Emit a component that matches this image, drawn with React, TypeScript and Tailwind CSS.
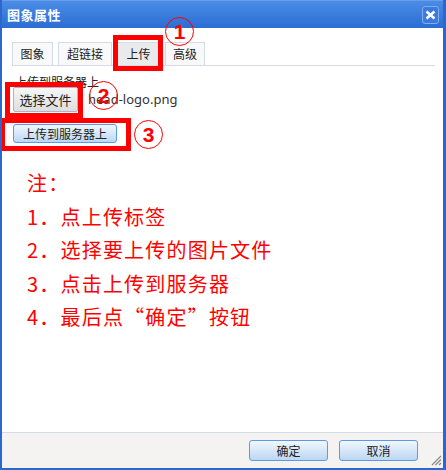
import React from 'react';

const CJK = "font-['Noto_Sans_CJK_SC',sans-serif]";

const tabs = [
  { label: '图象', w: 'w-[41px]' },
  { label: '超链接', w: 'w-[54px]' },
  { label: '上传', w: 'w-[43px]', active: true },
  { label: '高级', w: 'w-[40px]' },
];

const notes = ['注：', '1．点上传标签', '2．选择要上传的图片文件', '3．点击上传到服务器', '4．最后点“确定”按钮'];

function Mark({ n, className }: { n: string; className: string }) {
  // red circled step number drawn on top of the dialog
  return (
    <div className={`absolute z-20 w-[29px] h-[29px] rounded-full border-[1.5px] border-[#ff0000] flex items-center justify-center text-[#ff0000] text-[21px] font-bold leading-none font-['Liberation_Sans',sans-serif] ${className}`}>
      {n}
    </div>
  );
}

function BlueButton({ children, className = '' }: { children: React.ReactNode; className?: string }) {
  return (
    <button className={`flex items-center justify-center rounded-[3px] border border-[#5b9be3] bg-gradient-to-b from-[#f1f7fd] to-[#bcd7f3] text-[12px] text-[#222] ${className}`}>
      {children}
    </button>
  );
}

export default function App() {
  return (
    <div className={`relative w-[446px] h-[470px] flex flex-col bg-white border-l-[2px] border-r-[3px] border-b-[2px] border-[#2c68cc] overflow-hidden ${CJK}`}>
      {/* title bar */}
      <div className="h-[28px] shrink-0 flex items-center justify-between pl-[5px] pr-[4px] bg-gradient-to-b from-[#4a8ce6] to-[#2b6dd3] border-t border-[#6a9fe8]">
        <span className="text-[13px] font-bold text-white tracking-[0.5px]">图象属性</span>
        <div className="w-[17px] h-[18px] flex items-center justify-center rounded-[3px] border border-[#86adea] bg-[#3a7be0]">
          <svg width="11" height="10" viewBox="0 0 11 10">
            <path d="M1.5 1.5 L9.5 8.5 M9.5 1.5 L1.5 8.5" stroke="white" strokeWidth="2.6" />
          </svg>
        </div>
      </div>

      {/* body */}
      <div className="relative flex-1 flex flex-col">
        <div className="mt-[14px] ml-[10px] mr-[8px] flex gap-[5px] border-b border-[#d3dbe7]">
          {tabs.map((t) => (
            <div
              key={t.label}
              className={`${t.w} h-[23px] flex items-center justify-center border border-b-0 border-[#d3dbe7] text-[12px] text-[#222] ${t.active ? 'bg-[#e9eaec]' : 'bg-[#f9f9f9]'}`}
            >
              {t.label}
            </div>
          ))}
        </div>

        <div className="ml-[13px] mt-[9px] text-[12px] leading-[14px] text-[#222]">上传到服务器上</div>

        <div className="ml-[11px] mt-[-2px] flex items-center gap-[10px]">
          <button className="w-[65px] h-[25px] flex items-center justify-center rounded-[2px] border border-[#a5b6cc] bg-gradient-to-b from-[#f6f6f6] to-[#dedede] text-[13px] text-[#222]">
            选择文件
          </button>
          <span className="text-[13px] text-[#333] font-['Noto_Sans',sans-serif]">head-logo.png</span>
        </div>

        <BlueButton className="ml-[11px] mt-[12px] w-[104px] h-[19px]">上传到服务器上</BlueButton>

        <div className="ml-[25px] mt-[23px] flex flex-col text-[20px] leading-[33.5px] tracking-[1.2px] text-[#ff0000]">
          {notes.map((n) => (
            <div key={n}>{n}</div>
          ))}
        </div>

        {/* annotation boxes */}
        <div className="absolute z-10 left-[111px] top-[7px] w-[50px] h-[36px] border-[5px] border-[#ff0000]" />
        <div className="absolute z-10 left-[3px] top-[54px] w-[78px] h-[36px] border-[5px] border-[#ff0000]" />
        <div className="absolute z-10 left-[-2px] top-[90px] w-[131px] h-[33px] border-[5px] border-[#ff0000]" />
      </div>

      <Mark n="1" className="left-[163px] top-[17px]" />
      <Mark n="2" className="left-[87px] top-[81px]" />
      <Mark n="3" className="left-[132px] top-[120px]" />

      {/* footer */}
      <div className="relative h-[36px] shrink-0 flex items-center justify-end gap-[11px] pr-[25px] border-t border-[#d3dbe7] bg-[#f4f3f2]">
        <BlueButton className="w-[79px] h-[21px]">确定</BlueButton>
        <BlueButton className="w-[79px] h-[21px]">取消</BlueButton>
        <svg className="absolute right-[1px] bottom-[2px]" width="12" height="12" viewBox="0 0 12 12">
          <path d="M11 2 L2 11 M11 5.5 L5.5 11 M11 9 L9 11" stroke="#8a8a8a" strokeWidth="1.2" />
        </svg>
      </div>
    </div>
  );
}
